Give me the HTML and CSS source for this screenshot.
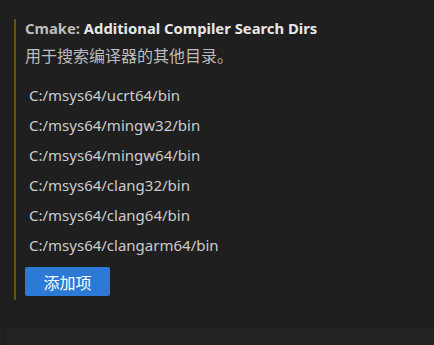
FILE: index.html
```html
<!DOCTYPE html>
<html lang="zh-CN">
<head>
  <meta charset="UTF-8" />
  <title>Settings</title>
  <link rel="stylesheet" href="styles.css">
</head>
<body>
  <div class="setting">
    <div class="setting-title"><span class="category">Cmake: </span>Additional Compiler Search Dirs</div>
    <div class="setting-desc">用于搜索编译器的其他目录。</div>
    <ul class="dir-list">
      <li>C:/msys64/ucrt64/bin</li>
      <li>C:/msys64/mingw32/bin</li>
      <li>C:/msys64/mingw64/bin</li>
      <li>C:/msys64/clang32/bin</li>
      <li>C:/msys64/clang64/bin</li>
      <li>C:/msys64/clangarm64/bin</li>
    </ul>
    <button class="add-btn">添加项</button>
  </div>
  <div class="next-setting"></div>
</body>
</html>
```
FILE: styles.css
```css
body {
  margin: 0;
  background: #1f1f1f;
  font-family: "Noto Sans", "Noto Sans CJK SC", sans-serif;
  font-size: 15px;
  color: #cccccc;
  height: 345px;
  overflow: hidden;
}
.setting {
  margin: 19px 0 0 14px;
  border-left: 2px solid #6a5119;
  padding: 0 0 4px 9px;
}
.setting-title {
  line-height: 18px;
  font-weight: bold;
  font-size: 14.8px;
  color: #e7e7e7;
}
.category { color: #bdbdbd; }
.setting-desc {
  margin-top: 8px;
  line-height: 22px;
  font-size: 16px;
  color: #bcbcbc;
}
.dir-list {
  list-style: none;
  margin: 13px 0 0 0;
  padding: 0;
}
.dir-list li {
  height: 30px;
  line-height: 30px;
  padding-left: 4px;
}
.add-btn {
  margin-top: 7px;
  width: 85px;
  height: 29px;
  border: none;
  border-radius: 2px;
  background: #2c7ad6;
  color: #ffffff;
  font-family: "Noto Sans CJK SC", sans-serif;
  font-size: 16px;
  padding: 0;
  display: block;
}
.next-setting {
  margin: 29px 0 0 7px;
  height: 20px;
  background: #222325;
}
```
